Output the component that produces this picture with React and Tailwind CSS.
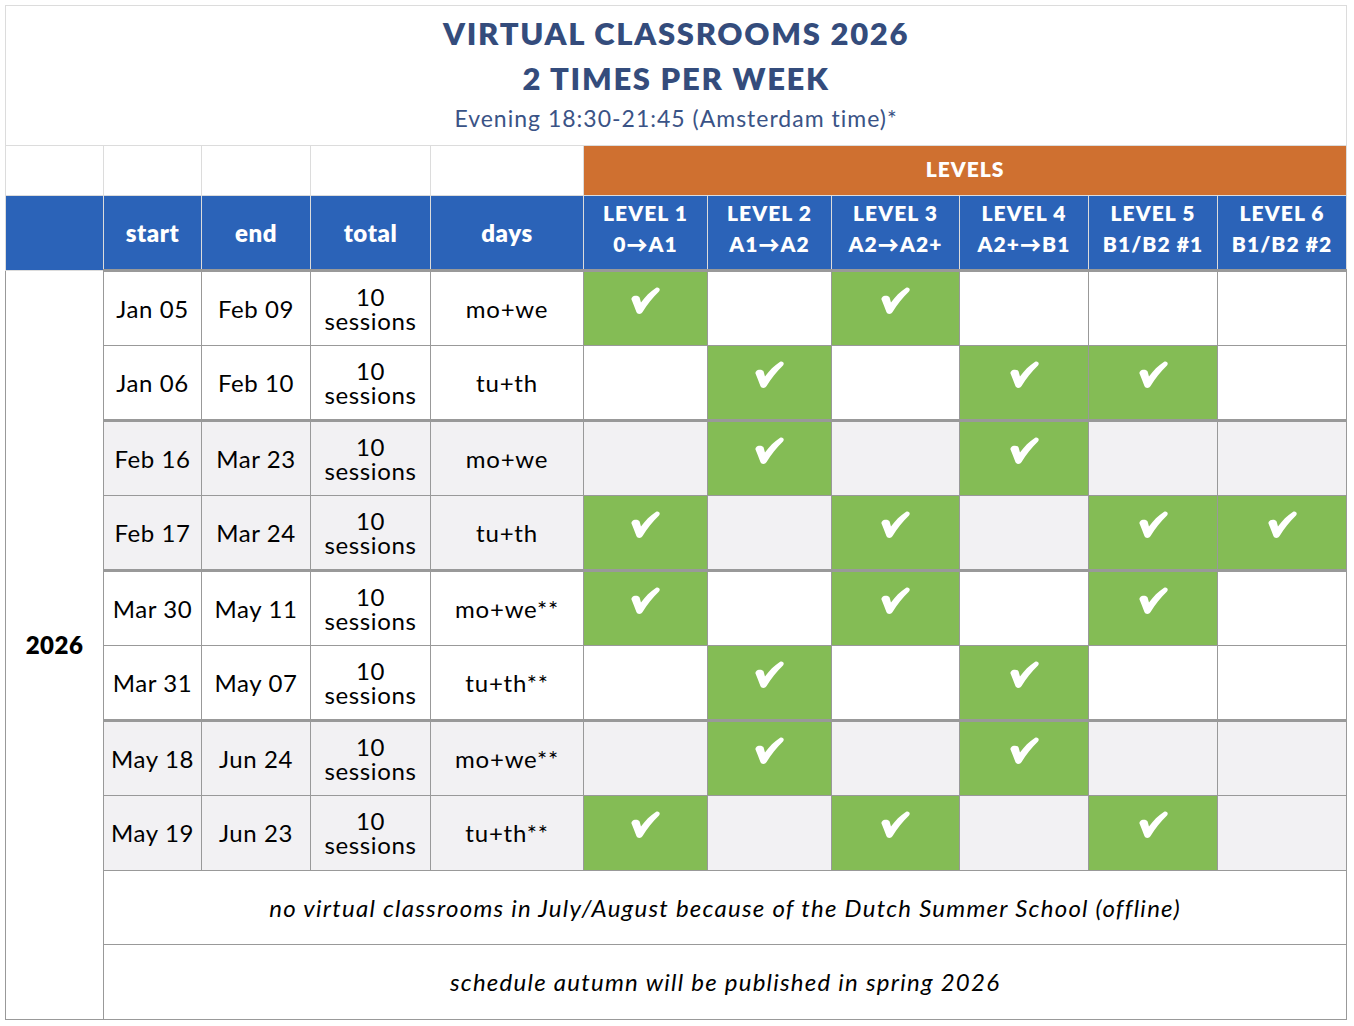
import React from "react";

const rows = [
  { s: "Jan 05", e: "Feb 09", d: "mo+we", c: [1, 0, 1, 0, 0, 0], gray: false, thick: true },
  { s: "Jan 06", e: "Feb 10", d: "tu+th", c: [0, 1, 0, 1, 1, 0], gray: false, thick: false },
  { s: "Feb 16", e: "Mar 23", d: "mo+we", c: [0, 1, 0, 1, 0, 0], gray: true, thick: true },
  { s: "Feb 17", e: "Mar 24", d: "tu+th", c: [1, 0, 1, 0, 1, 1], gray: true, thick: false },
  { s: "Mar 30", e: "May 11", d: "mo+we**", c: [1, 0, 1, 0, 1, 0], gray: false, thick: true },
  { s: "Mar 31", e: "May 07", d: "tu+th**", c: [0, 1, 0, 1, 0, 0], gray: false, thick: false },
  { s: "May 18", e: "Jun 24", d: "mo+we**", c: [0, 1, 0, 1, 0, 0], gray: true, thick: true },
  { s: "May 19", e: "Jun 23", d: "tu+th**", c: [1, 0, 1, 0, 1, 0], gray: true, thick: false },
];

const levels = [
  ["LEVEL 1", "0→A1"],
  ["LEVEL 2", "A1→A2"],
  ["LEVEL 3", "A2→A2+"],
  ["LEVEL 4", "A2+→B1"],
  ["LEVEL 5", "B1/B2 #1"],
  ["LEVEL 6", "B1/B2 #2"],
];

function Check() {
  return (
    <svg viewBox="0 0 31 28" width="31" height="28" className="mx-auto block" aria-hidden="true">
      <path
        fill="#ffffff"
        d="M2.2 10.2 C3.8 8.2 8.4 8.2 9.6 10.4 L11 15.4 C15.4 9.4 20.2 4.4 25.8 0.9 C28.6 -0.6 31 2.2 29 4.4 C22.6 10.4 17.2 17.4 12.6 25 C11.2 27.4 7.4 27.6 6.4 25 C4.8 20.8 3 16.2 1.6 12.8 C1.2 11.8 1.5 10.9 2.2 10.2 Z"
      />
    </svg>
  );
}

export default function App() {
  return (
    <div className="bg-white p-[5px] font-['Lato','Noto_Sans',sans-serif] text-black">
      <table className="w-[1341px] table-fixed border-collapse">
        <colgroup>
          <col className="w-[98px]" />
          <col className="w-[98px]" />
          <col className="w-[109px]" />
          <col className="w-[120px]" />
          <col className="w-[153px]" />
          <col className="w-[124px]" />
          <col className="w-[124px]" />
          <col className="w-[128px]" />
          <col className="w-[129px]" />
          <col className="w-[129px]" />
          <col className="w-[129px]" />
        </colgroup>
        <tbody>
          <tr className="h-[140px]">
            <td colSpan={11} className="border border-[#dcdcdc] text-center align-middle text-[#344c7c]">
              <div className="text-[31px] font-extrabold leading-[32px] tracking-[1.7px]">VIRTUAL CLASSROOMS 2026</div>
              <div className="mt-[13px] text-[31px] font-extrabold leading-[32px] tracking-[1.7px]">2 TIMES PER WEEK</div>
              <div className="mt-[8px] text-[23px] leading-[32px] tracking-[1px] text-[#3a5386]">Evening 18:30-21:45 (Amsterdam time)*</div>
            </td>
          </tr>
          <tr className="h-[50px]">
            <td className="border border-[#dcdcdc]"></td>
            <td className="border border-[#dcdcdc]"></td>
            <td className="border border-[#dcdcdc]"></td>
            <td className="border border-[#dcdcdc]"></td>
            <td className="border border-[#dcdcdc]"></td>
            <td colSpan={6} className="border border-[#dcdcdc] bg-[#cf7030] pb-[3px] text-center text-[21px] font-extrabold tracking-[1px] text-white">
              LEVELS
            </td>
          </tr>
          <tr className="h-[75px] bg-[#2b63b8] text-white">
            <td className="border border-[#dcdcdc]"></td>
            <td className="border border-[#dcdcdc] text-center text-[24px] font-extrabold tracking-[0.6px]">start</td>
            <td className="border border-[#dcdcdc] text-center text-[24px] font-extrabold tracking-[0.6px]">end</td>
            <td className="border border-[#dcdcdc] text-center text-[24px] font-extrabold tracking-[0.6px]">total</td>
            <td className="border border-[#dcdcdc] text-center text-[24px] font-extrabold tracking-[0.6px]">days</td>
            {levels.map(([a, b]) => (
              <td key={a} className="border border-[#dcdcdc] pb-[10px] text-center text-[21px] font-extrabold leading-[31px] tracking-[1.1px]">
                <div>{a}</div>
                <div>{b}</div>
              </td>
            ))}
          </tr>
          {rows.map((r, i) => (
            <tr key={i} className={`h-[75px] ${r.gray ? "bg-[#f2f1f3]" : "bg-white"}`}>
              {i === 0 && (
                <td rowSpan={10} className="border border-[#999] bg-white text-center text-[24px] font-extrabold tracking-[0.5px]">
                  2026
                </td>
              )}
              <td className={`border border-[#999] text-center text-[24px] tracking-[0.6px] ${r.thick ? "border-t-[3px]" : ""}`}>{r.s}</td>
              <td className={`border border-[#999] text-center text-[24px] tracking-[0.6px] ${r.thick ? "border-t-[3px]" : ""}`}>{r.e}</td>
              <td className={`border border-[#999] text-center text-[24px] leading-[24px] tracking-[0.6px] ${r.thick ? "border-t-[3px]" : ""}`}>
                <div>10</div>
                <div>sessions</div>
              </td>
              <td className={`border border-[#999] text-center text-[24px] tracking-[0.8px] ${r.thick ? "border-t-[3px]" : ""}`}>{r.d}</td>
              {r.c.map((v, j) => (
                <td
                  key={j}
                  className={`border border-[#999] p-0 pb-[16px] text-center align-middle ${r.thick ? "border-t-[3px]" : ""} ${v ? "bg-[#84bc55]" : ""}`}
                >
                  {v ? <Check /> : null}
                </td>
              ))}
            </tr>
          ))}
          <tr className="h-[74px]">
            <td colSpan={10} className="border border-[#999] text-center text-[24px] italic tracking-[1.25px]">
              no virtual classrooms in July/August because of the Dutch Summer School (offline)
            </td>
          </tr>
          <tr className="h-[75px]">
            <td colSpan={10} className="border border-[#999] text-center text-[24px] italic tracking-[1.25px]">
              schedule autumn will be published in spring 2026
            </td>
          </tr>
        </tbody>
      </table>
    </div>
  );
}
